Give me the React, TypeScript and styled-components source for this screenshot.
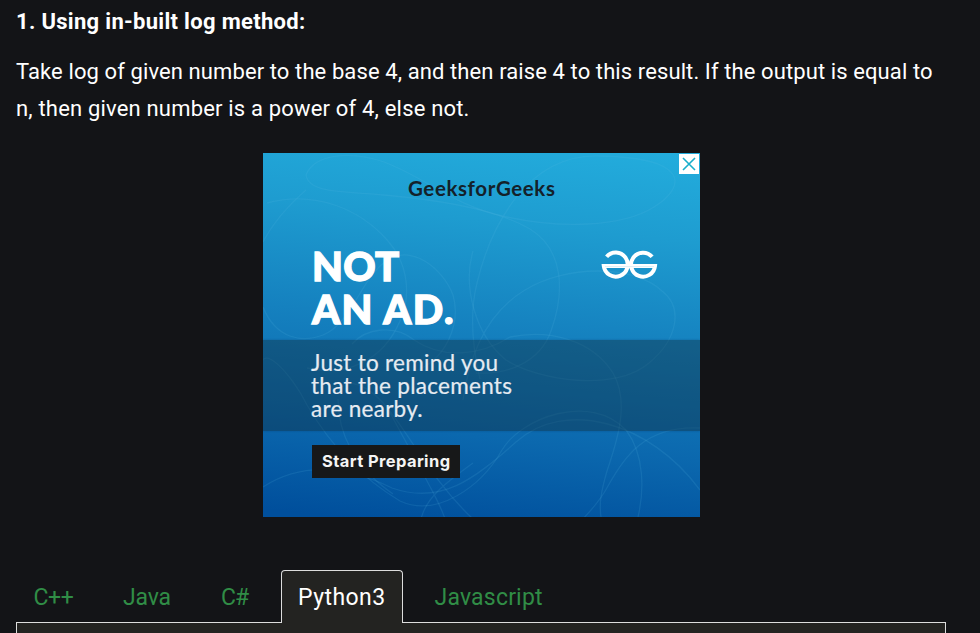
import React from "react";
import styled, { createGlobalStyle } from "styled-components";

const GlobalStyle = createGlobalStyle`
  * { box-sizing: border-box; }
  html, body { margin: 0; height: 100%; background: #131417; overflow: hidden; }
  body { font-family: Roboto, "Open Sans", sans-serif; color: #fff; }
  h2, p { margin: 0; }
`;

const Page = styled.main`
  display: flex;
  flex-direction: column;
  width: 980px;
  height: 633px;
  padding: 3px 34px 0 16px;
  overflow: hidden;
`;

const Line = styled.span<{ $spacing: number }>`
  display: block;
  width: max-content;
  letter-spacing: ${(p) => p.$spacing}px;
  white-space: nowrap;
`;

const Heading = styled.h2`
  flex: none;
  font-size: 22px;
  line-height: 37px;
  font-weight: 700;
`;

const Paragraph = styled.p`
  flex: none;
  margin-top: 13px;
  font-size: 22px;
  line-height: 37px;
`;

const Banner = styled.section`
  position: relative;
  display: flex;
  flex: none;
  flex-direction: column;
  width: 437px;
  height: 364px;
  margin: 26px 0 0 247px;
  overflow: hidden;
  background: linear-gradient(186deg, #23addd 0%, #1e9cd0 22%, #1581bf 48%, #0b68ae 75%, #004f9c 98%);
`;

const Swirls = styled.svg`
  position: absolute;
  inset: 0;
  fill: none;
  stroke: #68c4e4;
  stroke-opacity: 0.13;
  stroke-width: 1.3;
`;

const BannerBrand = styled.div`
  position: relative;
  height: 96px;
  padding: 21px 0 0 145px;
  font: 700 20.5px/28px Lato, sans-serif;
  color: #14212a;
`;

const BannerHero = styled.div`
  position: relative;
  display: flex;
  justify-content: space-between;
  height: 91px;
  padding: 0 42px 0 49px;
`;

const Slogan = styled.div`
  margin-top: -4px;
  font: 900 40px/43px Lato, sans-serif;
  -webkit-text-stroke: 1.3px #fff;
`;

const Logo = styled.svg`
  display: block;
  margin-top: 1px;
`;

const BannerNote = styled.div`
  position: relative;
  height: 91px;
  padding: 11px 0 0 48px;
  background: rgba(16, 38, 48, 0.38);
  box-shadow: 0 0 2px rgba(0, 35, 80, 0.3);
  color: #e6ebf2;
  font: 400 22.5px/23px Lato, sans-serif;
  -webkit-text-stroke: 0.2px #e6ebf2;
`;

const BannerButton = styled.button`
  position: relative;
  display: flex;
  align-items: center;
  width: 148px;
  height: 33px;
  margin: 14px 0 0 49px;
  padding: 0 0 2px 10px;
  border: 0;
  background: #171819;
  color: #f5f5f5;
  font: 700 16.5px/20px Inter, sans-serif;
`;

const CloseButton = styled.button`
  position: absolute;
  top: 1px;
  right: 1px;
  width: 20px;
  height: 20px;
  padding: 0;
  border: 0;
  background: #fff;

  svg { display: block; }
`;

const Tabs = styled.nav`
  display: flex;
  margin-top: 53px;
  height: 53px;
  flex: none;
  position: relative;
  z-index: 1;
`;

const Tab = styled.button<{ $width: number; $inset: number; $active?: boolean }>`
  flex: none;
  width: ${(p) => p.$width}px;
  height: 53px;
  padding: 0 0 0 ${(p) => p.$inset}px;
  border: 1px solid ${(p) => (p.$active ? "#ddd" : "transparent")};
  border-bottom: 0;
  border-radius: 4px 4px 0 0;
  background: ${(p) => (p.$active ? "#232321" : "transparent")};
  color: ${(p) => (p.$active ? "#fff" : "#308d46")};
  font: 400 23px/53px Roboto, sans-serif;
  text-align: left;
`;

const Panel = styled.div`
  flex: none;
  width: 930px;
  height: 40px;
  margin-top: -1px;
  border: 1px solid #ddd;
  background: #232321;
`;

const tabs = [
  { label: "C++", width: 89, inset: 16.5, spacing: -0.4 },
  { label: "Java", width: 98, inset: 17, spacing: -0.2 },
  { label: "C#", width: 78, inset: 17, spacing: -1 },
  { label: "Python3", width: 122, inset: 16, spacing: 0.45, active: true },
  { label: "Javascript", width: 156, inset: 30.5, spacing: 0.2 },
];

const curves = [
  "M0 89 C12 66 28 50 43 37",
  "M4 50 C54 37 98 57 125 88 C146 112 148 144 137 168 C120 208 83 224 44 215",
  "M0 154 C13 186 39 190 60 182 C88 171 98 126 123 108 C149 90 180 116 190 142 C198 170 184 207 150 219",
  "M43 22 C52 0 89 -2 121 9 C164 25 192 54 244 64 C295 75 358 75 391 54 C423 34 428 5 337 3 C263 0 227 76 214 130 C205 166 212 205 217 226",
  "M43 22 C46 41 82 38 121 42 C177 47 235 57 267 76 C301 97 302 139 288 178 C277 209 245 222 213 220",
  "M210 98 C200 132 211 181 243 207 C276 228 353 239 386 210 C414 187 421 155 399 138 C370 111 302 112 262 137 C217 164 205 214 200 247",
  "M89 191 C103 175 132 171 151 187 C181 207 218 202 247 184 C287 176 329 187 350 220 C366 248 356 283 344 318 C338 339 336 350 338 364",
  "M-2 224 C-7 180 30 223 44 252 C72 300 107 330 137 348 C174 365 218 334 239 297 C258 265 327 239 363 277 C382 302 381 339 375 364",
  "M0 334 C45 305 94 318 129 335 C178 352 210 327 253 289 C302 245 387 269 437 337",
  "M437 275 C381 272 360 306 345 333 C336 350 325 360 320 366",
  "M75 246 C75 280 91 314 130 341 M88 230 C130 236 149 309 210 366 M125 256 C157 315 178 352 182 366 M210 310 C181 331 163 345 158 366",
];

export default function App() {
  return (
    <>
      <GlobalStyle />
      <Page>
        <Heading><Line $spacing={0.31}>1. Using in-built log method:</Line></Heading>
        <Paragraph>
          <Line $spacing={0.1}>Take log of given number to the base 4, and then raise 4 to this result. If the output is equal to</Line>
          <Line $spacing={0.18}>n, then given number is a power of 4, else not.</Line>
        </Paragraph>
        <Banner>
          <Swirls width="437" height="364" viewBox="0 0 437 364">
            {curves.map((d) => <path key={d} d={d} />)}
          </Swirls>
          <BannerBrand><Line $spacing={0.6}>GeeksforGeeks</Line></BannerBrand>
          <BannerHero>
            <Slogan>
              <Line $spacing={0.3}>NOT</Line>
              <Line $spacing={1.4}>AN AD.</Line>
            </Slogan>
            <Logo width="57" height="30" viewBox="0 0 57 30" fill="none" stroke="#fff" strokeWidth="4">
              <path d="M5.6 6.8 A12 12 0 1 1 2.8 16 H54 A12 12 0 1 1 51.1 6.8" />
              <path d="M4 16.6 H53" stroke="#c4e2f1" strokeWidth="0.6" />
            </Logo>
          </BannerHero>
          <BannerNote>
            <Line $spacing={0.28}>Just to remind you</Line>
            <Line $spacing={0.28}>that the placements</Line>
            <Line $spacing={0.28}>are nearby.</Line>
          </BannerNote>
          <BannerButton><Line $spacing={0.4}>Start Preparing</Line></BannerButton>
          <CloseButton aria-label="Close">
            <svg width="20" height="20" viewBox="0 0 20 20" stroke="#19aecb" strokeWidth="1.6">
              <path d="M4 4 L16 16 M16 4 L4 16" />
            </svg>
          </CloseButton>
        </Banner>
        <Tabs>
          {tabs.map((tab) => (
            <Tab key={tab.label} $width={tab.width} $inset={tab.inset} $active={tab.active}>
              <Line $spacing={tab.spacing}>{tab.label}</Line>
            </Tab>
          ))}
        </Tabs>
        <Panel />
      </Page>
    </>
  );
}
